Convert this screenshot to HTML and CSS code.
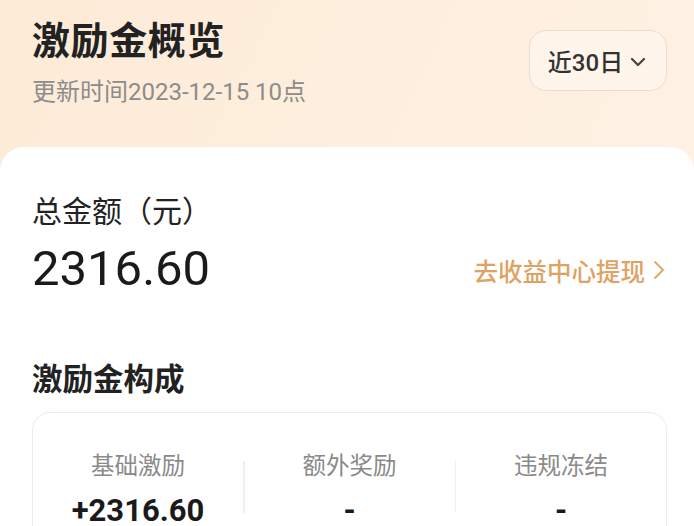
FILE: index.html
```html
<!DOCTYPE html>
<html lang="zh-CN">
<head>
<meta charset="utf-8">
<link rel="stylesheet" href="styles.css">
</head>
<body>
<div class="page">
  <header class="top">
    <div class="top-text">
      <h1 class="title">激励金概览</h1>
      <div class="updated">更新时间2023-12-15 10点</div>
    </div>
    <button class="range">近30日<svg class="chev-down" width="16" height="10" viewBox="0 0 16 10"><path d="M2 2 L8 8 L14 2" fill="none" stroke="#444" stroke-width="2.2" stroke-linecap="round" stroke-linejoin="round"/></svg></button>
  </header>
  <main class="sheet">
    <div class="total-label">总金额（元）</div>
    <div class="total-row">
      <div class="total-value">2316.60</div>
      <a class="withdraw">去收益中心提现<svg class="chev-right" width="12" height="20" viewBox="0 0 12 20"><path d="M2 2 L10 10 L2 18" fill="none" stroke="#e0a565" stroke-width="1.8" stroke-linecap="round" stroke-linejoin="round"/></svg></a>
    </div>
    <h2 class="section">激励金构成</h2>
    <div class="breakdown">
      <div class="cell">
        <div class="cell-label">基础激励</div>
        <div class="cell-value">+2316.60</div>
      </div>
      <div class="divider"></div>
      <div class="cell">
        <div class="cell-label">额外奖励</div>
        <div class="cell-value">-</div>
      </div>
      <div class="divider"></div>
      <div class="cell">
        <div class="cell-label">违规冻结</div>
        <div class="cell-value">-</div>
      </div>
    </div>
  </main>
</div>
</body>
</html>
```
FILE: styles.css
```css
* { box-sizing: border-box; }
html, body { margin: 0; padding: 0; }
body {
  font-family: Roboto, "Noto Sans CJK SC", sans-serif;
  color: #222;
  background: #fff;
  width: 694px;
  height: 526px;
  overflow: hidden;
}
.page {
  background: linear-gradient(115deg, #fdebd7 0%, #feefdf 55%, #fff4e8 100%);
  height: 526px;
  overflow: hidden;
}
.top {
  height: 147px;
  display: flex;
  justify-content: space-between;
  align-items: flex-start;
  padding: 0 27px 0 32px;
}
.title {
  margin: 0;
  padding-top: 18px;
  font-size: 38px;
  line-height: 46px;
  font-weight: 700;
  color: #222;
  letter-spacing: 0.6px;
}
.updated {
  margin-top: 13px;
  font-size: 24px;
  line-height: 30px;
  color: #8c8c8c;
}
.range {
  margin-top: 30px;
  width: 138px;
  height: 61px;
  border: 1.5px solid #ecdccb;
  border-radius: 17px;
  background: rgba(255, 250, 243, 0.5);
  font-family: Roboto, "Noto Sans CJK SC", sans-serif;
  font-size: 24px;
  font-weight: 500;
  color: #333;
  display: flex;
  align-items: center;
  justify-content: center;
  gap: 7px;
  padding: 0 2px 0 0;
}
.chev-down { margin-top: 2px; }
.sheet {
  background: #fff;
  border-radius: 24px 24px 0 0;
  padding: 47px 27px 0 32px;
  height: 379px;
}
.total-label {
  font-size: 30px;
  line-height: 36px;
  color: #222;
}
.total-row {
  display: flex;
  justify-content: space-between;
  align-items: center;
  margin-top: 10px;
}
.total-value {
  font-size: 49px;
  line-height: 58px;
  color: #1a1a1a;
}
.withdraw {
  display: flex;
  align-items: center;
  gap: 8px;
  font-size: 24.5px;
  font-weight: 500;
  color: #e0a263;
  margin-top: 2px;
  padding-right: 2px;
}
.section {
  margin: 64px 0 0;
  font-size: 30.5px;
  line-height: 36px;
  font-weight: 600;
  color: #222;
}
.breakdown {
  margin-top: 14px;
  border: 1.5px solid #ececec;
  border-bottom: none;
  border-radius: 18px 18px 0 0;
  height: 130px;
  display: flex;
  align-items: flex-start;
  padding-top: 38px;
}
.cell {
  flex: 1;
  text-align: center;
}
.cell-label {
  font-size: 23.5px;
  line-height: 30px;
  color: #8a8a8a;
}
.cell-value {
  margin-top: 12px;
  font-size: 31px;
  line-height: 36px;
  font-weight: 700;
  color: #1a1a1a;
}
.divider {
  width: 1.5px;
  height: 52px;
  background: #efefef;
  margin-top: 10px;
}
```
